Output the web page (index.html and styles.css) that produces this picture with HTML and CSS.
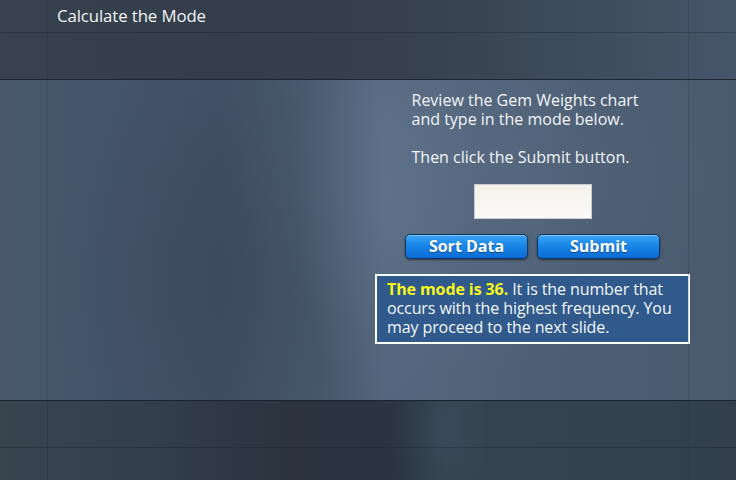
FILE: index.html
```html
<!DOCTYPE html>
<html>
<head>
<meta charset="utf-8">
<link rel="stylesheet" href="styles.css">
</head>
<body>
<div class="slide">
  <header class="top">
    <div class="gridline-h top-line"></div>
    <h1 class="title">Calculate the Mode</h1>
  </header>
  <main class="stage">
    <div class="panel">
      <div class="instructions">
        <p>Review the Gem Weights chart<br>and type in the mode below.</p>
        <p>Then click the Submit button.</p>
      </div>
      <input class="answer" type="text" aria-label="Mode">
      <div class="buttons">
        <button class="btn">Sort Data</button>
        <button class="btn">Submit</button>
      </div>
      <div class="feedback"><strong class="hl">The mode is 36.</strong> It is the number that occurs with the highest frequency. You may proceed to the next slide.</div>
    </div>
  </main>
  <footer class="bottom">
    <div class="gridline-h bottom-line"></div>
  </footer>
  <div class="gridline-v left-v"></div>
  <div class="gridline-v right-v"></div>
</div>
</body>
</html>
```

FILE: styles.css
```css
* { box-sizing: border-box; }
html, body { margin: 0; padding: 0; }
body {
  width: 736px;
  height: 480px;
  overflow: hidden;
  font-family: "Open Sans", "Noto Sans", "Liberation Sans", sans-serif;
  background: #36424f;
}
.slide {
  position: relative;
  width: 736px;
  height: 480px;
  display: flex;
  flex-direction: column;
}
.top {
  position: relative;
  height: 80px;
  flex: none;
  border-bottom: 1px solid #1c2733;
  background:
    linear-gradient(90deg, #37424e 0%, #333e4a 30%, #36414d 55%, #3f4c5c 80%, #46566a 100%);
}
.title {
  margin: 0;
  padding: 5px 0 0 57px;
  font-size: 16.8px;
  font-weight: 400;
  color: #f2f4f6;
  line-height: 22px;
  letter-spacing: -0.1px;
}
.gridline-h {
  position: absolute;
  left: 0;
  right: 0;
  height: 1px;
  background: rgba(20, 30, 40, 0.35);
}
.top-line { top: 32px; }
.gridline-v {
  position: absolute;
  top: 0;
  bottom: 0;
  width: 1px;
  background: rgba(20, 30, 40, 0.18);
}
.left-v { left: 47px; }
.right-v { left: 688px; }
.stage {
  flex: none;
  height: 320px;
  padding: 11px 0 0 375px;
  background:
    radial-gradient(ellipse 90px 240px at 385px 110px, rgba(110, 130, 155, 0.35), rgba(110, 130, 155, 0) 100%),
    radial-gradient(ellipse 240px 200px at 480px 90px, rgba(100, 120, 145, 0.3), rgba(100, 120, 145, 0) 100%),
    radial-gradient(ellipse 180px 260px at 230px 200px, rgba(50, 62, 78, 0.35), rgba(50, 62, 78, 0) 100%),
    linear-gradient(90deg, #4a5a6c 0%, #45556a 12%, #425166 30%, #4a5b6f 44%, #53657b 52%, #52647a 62%, #4c5d72 80%, #4a5b6e 100%);
}
.panel {
  width: 315px;
  display: flex;
  flex-direction: column;
  align-items: center;
}
.instructions {
  width: 254px;
  padding-left: 6px;
  color: #f2f4f7;
  font-size: 16px;
  line-height: 19px;
  white-space: nowrap;
}
.instructions p { margin: 0 0 19px 0; }
.instructions p:last-child { margin-bottom: 0; }
.answer {
  margin-top: 17px;
  width: 118px;
  height: 35px;
  border: 1px solid #c9ccd0;
  background: linear-gradient(#f4f1ea, #fbfaf7);
  outline: none;
  padding: 0;
}
.buttons {
  margin-top: 15px;
  display: flex;
  gap: 9px;
}
.btn {
  width: 123px;
  height: 25px;
  border: 1px solid #0f3663;
  border-radius: 5px;
  background: linear-gradient(#3aa6f5 0%, #1a86e8 45%, #0b6bd4 100%);
  box-shadow: inset 0 1px 0 rgba(255, 255, 255, 0.35), 0 1px 2px rgba(0, 0, 0, 0.5);
  color: #ffffff;
  font-family: "Open Sans", "Noto Sans", "Liberation Sans", sans-serif;
  font-size: 16px;
  font-weight: 700;
  line-height: 21px;
  padding: 0;
  text-shadow: 0 1px 1px rgba(0, 0, 0, 0.35);
}
.feedback {
  margin-top: 15px;
  width: 315px;
  height: 70px;
  border: 2px solid #ffffff;
  background: #305a8c;
  color: #f4f6f9;
  font-size: 16px;
  line-height: 19px;
  padding: 4px 4px 0 10px;
  letter-spacing: -0.1px;
}
.hl { color: #f7f71c; font-weight: 700; }
.bottom {
  position: relative;
  flex: 1;
  border-top: 1px solid #1a2430;
  background:
    radial-gradient(ellipse 50px 100px at 440px 30px, rgba(70, 90, 112, 0.35), rgba(70, 90, 112, 0) 100%),
    linear-gradient(90deg, #38454f 0%, #333f4b 20%, #2a333e 40%, #2b3541 55%, #36434f 62%, #34424f 80%, #33404c 100%);
}
.bottom-line { top: 46px; }
```
